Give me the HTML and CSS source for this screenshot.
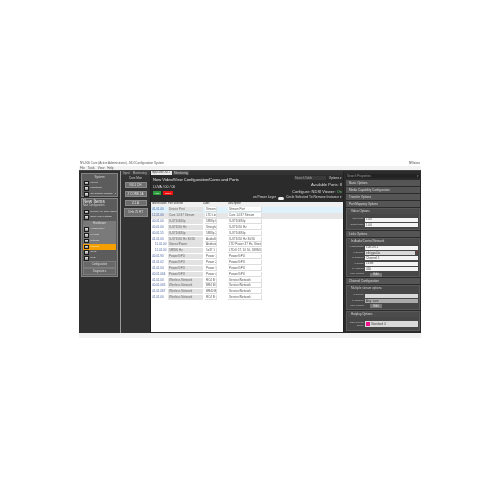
FILE: index.html
```html
<!DOCTYPE html>
<html lang="en">
<head>
<meta charset="utf-8">
<title>Configuration</title>
<link rel="stylesheet" href="styles.css">
</head>
<body>
<div class="window">
  <div class="titlebar"><span>NV-900 Core (Active Administrator) - NDI Configuration System</span><span class="brand">NVision</span></div>
  <div class="menubar"><span>File</span><span>Tools</span><span>View</span><span>Help</span></div>
  <div class="app">
    <aside class="side">
      <div class="box sys">
        <div class="box-title">System</div>
        <div class="nav"><i class="ico"></i>Layout</div>
        <div class="nav"><i class="ico"></i>Monitoring</div>
        <div class="nav"><i class="ico"></i>On-Console Manage <b>▸</b></div>
      </div>
      <div class="box">
        <div class="box-head">New Items</div>
        <div class="box-sub">New Configuration</div>
        <div class="nav"><i class="ico"></i>Review Any Core Values</div>
        <div class="nav"><i class="ico"></i>Open Help in Studio</div>
        <div class="box-title lite">Hardware</div>
        <div class="nav lite"><i class="ico"></i>Audio/ULTRA</div>
        <div class="nav lite"><i class="ico"></i>IP Ports</div>
        <div class="nav lite"><i class="ico"></i>Network</div>
        <div class="nav active"><i class="ico"></i>Network</div>
        <div class="nav"><i class="ico"></i>GPIO</div>
        <div class="nav"><i class="ico"></i>UPS</div>
        <div class="box-title tall">Configuration</div>
        <div class="box-title tall">Diagnostics</div>
      </div>
    </aside>
    <section class="mid">
      <div class="mid-tabs"><span>Input</span><span>Monitoring</span></div>
      <div class="mid-title">Core Mon</div>
      <div class="mid-btn">NV-1 CH</div>
      <div class="mid-btn">Z CORE 2A</div>
      <div class="mid-btn">Z-1 A</div>
      <div class="mid-btn big">5 Hz 75 HT</div>
    </section>
    <main class="main">
      <div class="tabs"><span class="tab on">Input and Out 1</span><span class="tab">Monitoring</span></div>
      <div class="head">
        <div class="head-left">
          <h1>New Video/View Configuration/Cores and Ports</h1>
          <div class="path">LUVA / 00 / 00</div>
          <div class="btns"><span class="go">Apply</span><span class="stop">Cancel</span></div>
        </div>
        <div class="head-right">
          <div class="search"><span class="field">Search Table</span><span>Options ▾</span></div>
          <div class="info">Available Ports: 8</div>
          <div class="info">Configure: NDSI Viewer: <em>On</em></div>
          <div class="small">on Power Layer <u></u> Circle Selected To Remove Instance ▾</div>
        </div>
      </div>
      <div class="grid">
        <div class="row hdr"><span>Identification</span><span>Port Selector</span><span>Label</span><span>Description</span></div>
        <div class="row sel"><a>41.01.00</a><s>Device Port</s><input value="Stream 1"><input value="Stream Port"></div>
        <div class="row alt"><a>12.01.00</a><s>Core 14:37 Stream</s><input value="LTD Link"><input value="Core 14:37 Stream"></div>
        <div class="row"><a>40.01.00</a><s>S-STD/480p</s><input value="5888p 60"><input value="S-STD/480p"></div>
        <div class="row"><a>40.01.00</a><s>S-STD/50 Hz</s><input value="Stringhal"><input value="S-STD/50 Hz"></div>
        <div class="row"><a>40.01.55</a><s>S-STD/480p</s><input value="5888p 24"><input value="S-STD/480p"></div>
        <div class="row"><a>41.01.00</a><s>S-STD/50 Hz 30/50</s><input value="Audio/Mono"><input value="S-STD/50 Hz 30/50"></div>
        <div class="row"><a class="in">11.01.00</a><s>Stereo/Power</s><input value="Android"><input value="LTD Power 37 Hz, Stereo/10"></div>
        <div class="row"><a class="in">11.01.00</a><s>5888/0 Hz</s><input value="5x37 1"><input value="LTD/0 5T, 10 50, 5888/0 Hz"></div>
        <div class="row"><a>40.01.90</a><s>Power/GPU</s><input value="Power 1"><input value="Power/GPU"></div>
        <div class="row"><a>41.01.02</a><s>Power/GPU</s><input value="Power 2"><input value="Power/GPU"></div>
        <div class="row"><a>41.01.04</a><s>Power/GPU</s><input value="Power 3"><input value="Power/GPU"></div>
        <div class="row"><a>40.01.064</a><s>Power/GPU</s><input value="Power 4"><input value="Power/GPU"></div>
        <div class="row"><a>41.01.00</a><s>Wireless Network</s><input value="RC4 B 01"><input value="Service/Network"></div>
        <div class="row"><a>40.01.065</a><s>Wireless Network</s><input value="BR4 B 01"><input value="Service/Network"></div>
        <div class="row"><a>41.01.067</a><s>Wireless Network</s><input value="BR40 B 01"><input value="Service/Network"></div>
        <div class="row"><a>41.01.00</a><s>Wireless Network</s><input value="RC4 B 01"><input value="Service/Network"></div>
      </div>
    </main>
    <aside class="props">
      <div class="p-search"><span>Search Properties</span><span>▾</span></div>
      <div class="bar">Basic Options</div>
      <div class="bar">Media Capability Configuration</div>
      <div class="bar">Transfer Options</div>
      <div class="bar">Port Mapping Options</div>
      <div class="pbox vid">
        <div class="bar flat">Video Options</div>
        <div class="form"><label>Input Rate:</label><span class="val">1.00</span></div>
        <div class="form"><label>Output Rate:</label><span class="val">1.00</span></div>
      </div>
      <div class="bar">Links Options</div>
      <div class="pbox links">
        <div class="bar flat">In Audio/Control Network</div>
        <div class="form"><label>In Bandwidth:</label><span class="val">100.0.0.1</span></div>
        <div class="form"><label>In Device:</label><span class="val drop">eth/gpu/0a</span><b class="err">!</b></div>
        <div class="form"><label>In Channel:</label><span class="val">Channel 1</span></div>
        <div class="form"><label>In Depth:</label><span class="val">16 bit</span></div>
        <div class="form"><label>In Address:</label><span class="val">450</span></div>
        <div class="form"><label>PTP Format:</label><span class="push">Edit</span></div>
      </div>
      <div class="bar">Channel Configuration</div>
      <div class="pbox chan">
        <div class="plain">Multiple stream options</div>
        <div class="form"><label>In Device:</label><span class="val drop">&nbsp;</span></div>
        <div class="form"><label>In Channel:</label><span class="val grey">Any_core</span></div>
        <div class="form"><label>PTP Format:</label><span class="push">Edit</span></div>
      </div>
      <div class="pbox last">
        <div class="bar flat">Hotplug Options</div>
        <div class="form hot"><label>Stack Selection<br>Identity:</label><span class="val drop"><i class="swatch"></i>Standard 4</span></div>
      </div>
    </aside>
  </div>
  <div class="foot"></div>
</div>
</body>
</html>
```

FILE: styles.css
```css
* { box-sizing: border-box; }
html, body { margin: 0; height: 100%; background: #fff; }
body { padding: 161px 79px 0 79px; font-family: "Liberation Sans", Arial, sans-serif; font-size: 3px; line-height: 1; white-space: nowrap; }

.window { width: 342px; height: 177px; display: flex; flex-direction: column; background: #f4f4f4; filter: blur(0.3px); }
.titlebar { height: 5px; display: flex; justify-content: space-between; align-items: center; background: #fff; color: #555; padding: 0 1px; }
.brand { color: #777; font-weight: bold; }
.menubar { height: 4px; display: flex; gap: 3px; align-items: center; background: #f2f2f2; color: #555; padding-left: 1px; }

.app { height: 163px; display: flex; background: #2d2d2d; border-top: 1px solid #444; color: #ddd; }

.side { width: 42px; background: #303030; border-right: 1px solid #999; padding: 2px 2px 0; display: flex; flex-direction: column; gap: 1px; }
.box { flex: none; background: #5c5c5c; border: 1px solid #858585; padding: 1px; display: flex; flex-direction: column; }
.box.sys { height: 24px; }
.box-title { height: 5px; flex: none; display: flex; align-items: center; justify-content: center; color: #ddd; }
.box-title.lite { background: #7a7a7a; height: 6px; }
.box-title.tall { height: 7px; background: #686868; border: 1px solid #7c7c7c; font-size: 2.6px; }
.box-head { font-size: 4.6px; height: 5px; flex: none; color: #eee; }
.box-sub { height: 4px; flex: none; color: #ccc; font-size: 2.6px; }
.nav { height: 5.8px; flex: none; display: flex; align-items: center; gap: 2px; color: #e4e4e4; padding-left: 1px; font-size: 2.4px; }
.nav.lite { background: #7a7a7a; }
.nav b { margin-left: auto; font-weight: normal; padding-right: 1px; }
.nav.active { background: #f5a000; color: #fff3d0; }
.ico { width: 4.5px; height: 4.5px; background: linear-gradient(#f0f0f0, #888); border: 1px solid #1c1c1c; flex: none; }

.mid { width: 30px; background: #333; border-right: 1px solid #222; display: flex; flex-direction: column; align-items: center; }
.mid-tabs { width: 100%; height: 4px; flex: none; display: flex; gap: 3px; padding-left: 2px; align-items: center; background: #3c3c3c; color: #bbb; }
.mid-title { height: 7px; flex: none; display: flex; align-items: center; color: #ccc; }
.mid-btn { width: 22px; height: 6px; flex: none; margin-bottom: 3px; background: #6e6e6e; border: 1px solid #8a8a8a; color: #e0e0e0; display: flex; align-items: center; justify-content: center; }
.mid-btn.big { height: 9px; width: 24px; margin-top: -1px; }

.main { width: 193px; display: flex; flex-direction: column; padding-bottom: 1px; border-right: 1px solid #222; background: #2b2b2b; }
.tabs { height: 4px; flex: none; display: flex; background: #333; gap: 1px; }
.tab { padding: 0 1px; background: #4a4a4a; color: #ccc; display: flex; align-items: center; }
.tab.on { background: #e8e8e8; color: #333; font-size: 2.6px; width: 21px; }
.head { height: 27px; flex: none; background: #2b2b2b; display: flex; justify-content: space-between; color: #ddd; padding: 0 1px 0 2px; }
.head-left { display: flex; flex-direction: column; }
h1 { margin: 2px 0 0; font-size: 4.1px; font-weight: normal; color: #e8e8e8; line-height: 6px; }
.path { margin-top: 2px; font-size: 3.5px; height: 5px; display: flex; align-items: center; }
.btns { margin-top: 1px; display: flex; gap: 2px; }
.go, .stop { height: 3.5px; display: flex; align-items: center; justify-content: center; color: #fff; font-size: 2px; }
.go { width: 8px; background: #2a9d3a; }
.stop { width: 10px; background: #ee1111; }
.head-right { display: flex; flex-direction: column; align-items: flex-end; }
.search { margin-top: 1px; display: flex; gap: 3px; align-items: center; }
.field { width: 32px; height: 4px; background: #3a3a3a; color: #aaa; display: flex; align-items: center; padding-left: 1px; }
.info { margin-top: 3px; font-size: 4px; height: 4px; color: #ddd; }
.info em { color: #6fc36f; font-style: normal; }
.small { margin-top: 2px; display: flex; align-items: center; gap: 2px; font-size: 3.3px; height: 4px; }
.small u { width: 6px; height: 3px; background: #eee; border-radius: 2px; display: block; }

.grid { flex: 1; background: #fff; color: #555; }
.row { height: 5.85px; display: grid; grid-template-columns: 16px 35px 25px 34px; align-items: center; padding-left: 1px; }
.row.hdr { height: 5px; background: #f0f0f0; color: #333; font-size: 2.6px; }
.row.sel { background: #dff2fb; }
.row.alt { background: #e6e6e6; }
.row a { color: #46609e; }
.row a.in { padding-left: 3px; }
.row s { text-decoration: none; background: #e2e2e2; height: 5px; display: flex; align-items: center; padding-left: 1px; color: #666; }
.row input { font: inherit; color: #555; border: 0; border-bottom: 1px solid #ddd; border-right: 1px solid #ddd; background: #fff; height: 5px; width: 100%; padding: 0 0 0 1px; min-width: 0; }
.row input:nth-of-type(1) { width: 12px; margin-left: 2px; }

.props { flex: 1; min-width: 0; background: #2b2b2b; padding: 3px 1px 0 2px; display: flex; flex-direction: column; gap: 1px; color: #ccc; }
.p-search { height: 4px; flex: none; display: flex; justify-content: space-between; align-items: center; background: #222; padding: 0 1px; color: #999; margin-bottom: 1px; }
.bar { height: 6px; flex: none; background: #555; color: #d8d8d8; display: flex; align-items: center; padding-left: 3px; }
.bar.flat { height: 5px; background: #4c4c4c; margin: 0 0 1px; }
.pbox { flex: none; background: #474747; border: 1px solid #5a5a5a; padding: 0 1px; display: flex; flex-direction: column; }
.pbox.vid { height: 22px; }
.pbox.vid .bar.flat { margin-bottom: 3px; }
.pbox.links { height: 39px; }
.pbox.chan { height: 25px; }
.pbox.last { height: 20px; }
.plain { height: 5px; flex: none; margin-bottom: 2px; display: flex; align-items: center; padding-left: 3px; }
.form { height: 5.4px; flex: none; display: flex; align-items: center; gap: 1px; }
.form label { width: 16px; text-align: right; flex: none; color: #c8c8c8; font-size: 2.4px; }
.val { flex: 1; min-width: 0; height: 4px; background: #f4f4f4; color: #444; display: flex; align-items: center; padding-left: 1px; }
.val.grey { background: #aaa; color: #333; }
.val.drop { background: #d9d9d9; }
.err { color: #e33; width: 2px; flex: none; }
.push { width: 12px; height: 4px; margin-left: 5px; background: #777; color: #e6e6e6; display: flex; align-items: center; justify-content: center; }
.hot { height: 8px; margin-top: 2px; }
.hot label { font-size: 2.1px; line-height: 3px; }
.hot .val { height: 6px; }
.swatch { width: 4px; height: 4px; background: #f0148c; margin-right: 1px; flex: none; }

.foot { flex: 1; background: #f2f2f2; }
```
